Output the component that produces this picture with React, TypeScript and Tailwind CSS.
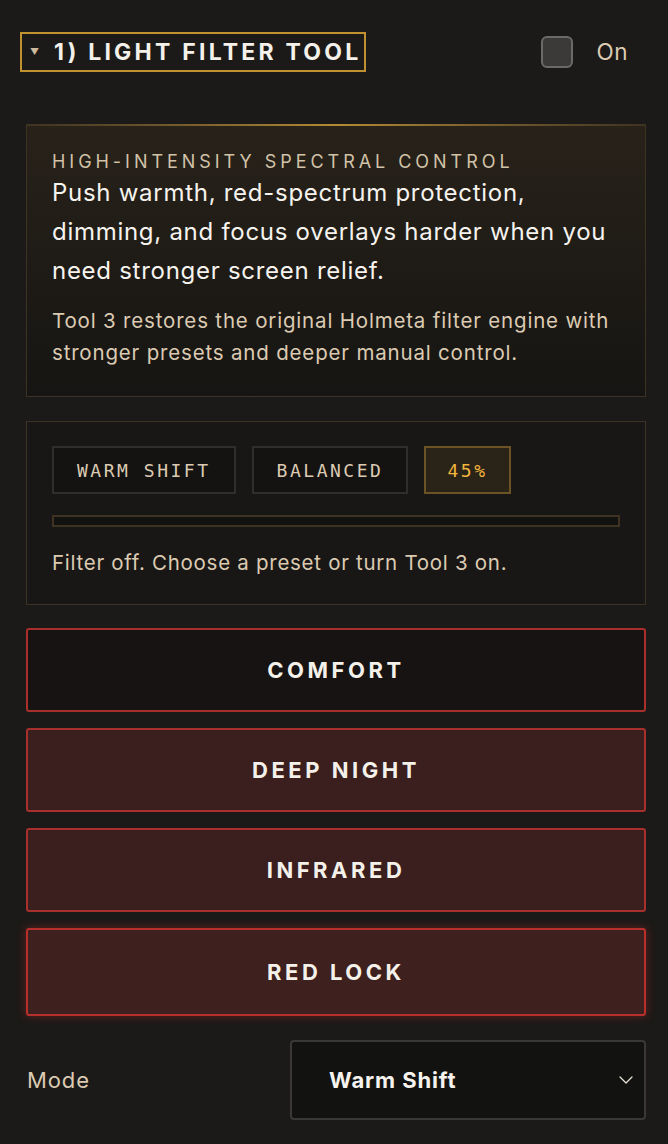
import { ChevronDown } from "lucide-react";

const presets = [
  { label: "COMFORT", active: false },
  { label: "DEEP NIGHT", active: true },
  { label: "INFRARED", active: true },
  { label: "RED LOCK", active: true, strong: true },
];

export default function App() {
  return (
    <div className="h-[1144px] overflow-hidden bg-[#1b1a18] pt-[32px] pr-[22px] pl-[26px] font-['Inter',sans-serif] text-white">
      {/* HEADER */}
      <div className="flex items-center justify-between">
        <div className="-ml-[6px] flex h-[40px] items-center gap-[15px] border-2 border-[#c0922f] pl-[8px] pr-[3px]">
          <span className="text-[9px] text-[#cdb99c]">▼</span>
          <span className="text-[23px] font-bold tracking-[0.14em] text-[#f4f1ea]">1) LIGHT FILTER TOOL</span>
        </div>
        <label className="mr-[18px] flex items-center gap-6">
          <span className="h-[32px] w-[32px] rounded-[6px] border-2 border-[#6c6a66] bg-[#3b3a38]" />
          <span className="text-[22.5px] tracking-[0.02em] text-[#dccbb2]">On</span>
        </label>
      </div>

      {/* INTRO CARD */}
      <div className="relative mt-[52px] border border-[#3e3322] bg-gradient-to-b from-[#282219] to-[#161513] px-[25px] pt-[26px] pb-[27px]">
        <div className="absolute inset-x-0 -top-px h-[2px] bg-gradient-to-r from-[#3e3322] via-[#b48a33] to-[#3e3322]" />
        <p className="text-[18px] leading-[22px] tracking-[0.22em] text-[#d2c2a8]">HIGH-INTENSITY SPECTRAL CONTROL</p>
        <p className="text-[24px] leading-[39px] tracking-[0.03em] text-[#f6f3ee]">
          Push warmth, red-spectrum protection, dimming, and focus overlays harder when you need stronger screen relief.
        </p>
        <p className="mt-[15px] text-[20.5px] leading-[32px] tracking-[0.04em] text-[#dccbb2]">
          Tool 3 restores the original Holmeta filter engine with stronger presets and deeper manual control.
        </p>
      </div>

      {/* STATUS CARD */}
      <div className="mt-[24px] border border-[#3e3322] bg-[#181716] px-[25px] pt-[24px] pb-[27px]">
        <div className="flex gap-[16px] font-['DejaVu_Sans_Mono',monospace] text-[18px] tracking-[0.14em]">
          <span className="flex h-[48px] items-center border-2 border-[#2f2e2c] bg-[#141312] px-[23px] text-[#dccbb2]">WARM SHIFT</span>
          <span className="flex h-[48px] items-center border-2 border-[#2f2e2c] bg-[#141312] px-[23px] text-[#dccbb2]">BALANCED</span>
          <span className="flex h-[48px] items-center border-2 border-[#6b5326] bg-[#2a2318] px-[21px] text-[#f1b43d]">45%</span>
        </div>
        <div className="mt-[21px] h-[12px] border-2 border-[#3e3322] bg-[#121211]" />
        <p className="mt-[22px] text-[20.5px] leading-[28px] tracking-[0.035em] text-[#dccbb2]">
          Filter off. Choose a preset or turn Tool 3 on.
        </p>
      </div>

      {/* PRESETS */}
      <div className="mt-[23px] flex flex-col gap-[16px]">
        {presets.map((p) => (
          <button
            key={p.label}
            className={
              p.strong
                ? "h-[88px] rounded-[3px] border-2 border-[#b8302c] bg-[#3e201e] text-[22px] font-bold tracking-[0.16em] text-[#f4f1ea] shadow-[0_0_10px_rgba(190,40,40,0.45)]"
                : p.active
                ? "h-[84px] rounded-[3px] border-2 border-[#a8302c] bg-[#3a1f1e] text-[22px] font-bold tracking-[0.16em] text-[#f4f1ea]"
                : "h-[84px] rounded-[3px] border-2 border-[#a8302c] bg-[#161312] text-[22px] font-bold tracking-[0.16em] text-[#f4f1ea]"
            }
          >
            {p.label}
          </button>
        ))}
      </div>

      {/* MODE */}
      <div className="mt-[24px] flex items-center justify-between">
        <span className="pl-px text-[22px] tracking-[0.04em] text-[#dccbb2]">Mode</span>
        <div className="flex h-[80px] w-[356px] items-center justify-between rounded-[4px] border-2 border-[#393836] bg-[#121211] pl-[37px] pr-[6px]">
          <span className="text-[22px] font-bold tracking-[0.04em] text-[#f6f3ee]">Warm Shift</span>
          <ChevronDown className="h-[24px] w-[24px] text-[#e8e2d8]" strokeWidth={1.25} />
        </div>
      </div>
    </div>
  );
}
